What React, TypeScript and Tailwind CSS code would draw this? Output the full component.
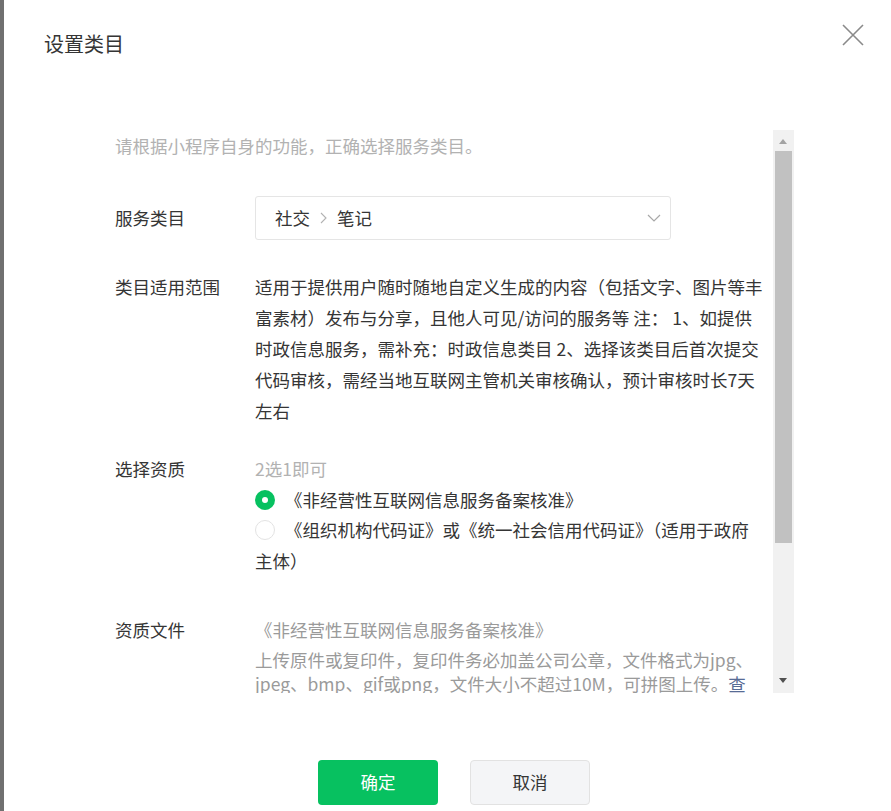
import { ReactElement } from 'react';

const scopeLines = [
  '适用于提供用户随时随地自定义生成的内容（包括文字、图片等丰',
  '富素材）发布与分享，且他人可见/访问的服务等 注： 1、如提供',
  '时政信息服务，需补充：时政信息类目 2、选择该类目后首次提交',
  '代码审核，需经当地互联网主管机关审核确认，预计审核时长7天',
  '左右',
];

const Radio = ({ checked }: { checked: boolean }): ReactElement =>
  checked ? (
    <span className="mr-[10px] flex h-[20px] w-[20px] shrink-0 items-center justify-center rounded-full bg-[#07c160]">
      <span className="h-[6px] w-[6px] rounded-full bg-white" />
    </span>
  ) : (
    <span className="mr-[10px] h-[20px] w-[20px] shrink-0 rounded-full border border-[#e3e3e3] bg-white" />
  );

export default function App(): ReactElement {
  return (
    <div className="relative flex h-[811px] w-[891px] overflow-hidden bg-white font-['Noto_Sans_CJK_SC',sans-serif] text-[#353535]">
      <div className="w-[4px] shrink-0 bg-[#707070]" />

      <div className="flex flex-1 flex-col">
        <h2 className="pl-[40px] pt-[29px] text-[20px] leading-[30px] font-normal">设置类目</h2>

        <button className="absolute left-[842px] top-[24px] h-[22px] w-[22px]" aria-label="关闭">
          <svg width="22" height="22" viewBox="0 0 22 22">
            <path d="M1 1L21 21M21 1L1 21" stroke="#8a8a8a" strokeWidth="1.6" fill="none" />
          </svg>
        </button>

        {/* scroll area */}
        <div className="ml-[111px] mt-[71px] flex h-[563px] w-[679px]">
          <div className="h-full w-[658px] overflow-hidden text-[17.5px]">
            <p className="leading-[31px] text-[#b2b2b2]">请根据小程序自身的功能，正确选择服务类目。</p>

            <div className="mt-[35px] flex">
              <div className="w-[140px] leading-[44px]">服务类目</div>
              <div className="flex h-[44px] w-[416px] items-center justify-between rounded-[3px] border border-[#e5e5e5] pl-[19px] pr-[9px]">
                <div className="flex items-center leading-[24px]">
                  <span>社交</span>
                  <svg className="mx-[10px]" width="7" height="12" viewBox="0 0 7 12">
                    <path d="M1 1L6 6L1 11" stroke="#b2b2b2" strokeWidth="1.1" fill="none" />
                  </svg>
                  <span>笔记</span>
                </div>
                <svg width="14" height="8" viewBox="0 0 14 8">
                  <path d="M1 1L7 7L13 1" stroke="#a8a8a8" strokeWidth="1.2" fill="none" />
                </svg>
              </div>
            </div>

            <div className="mt-[31px] flex">
              <div className="w-[140px] leading-[31px]">类目适用范围</div>
              <div className="leading-[31px]">
                {scopeLines.map((l) => (
                  <div key={l} className="whitespace-nowrap">{l}</div>
                ))}
              </div>
            </div>

            <div className="mt-[28px] flex">
              <div className="w-[140px] leading-[30.5px]">选择资质</div>
              <div className="leading-[30.5px]">
                <div className="text-[#b2b2b2]">2选1即可</div>
                <div className="flex items-center whitespace-nowrap">
                  <Radio checked />
                  《非经营性互联网信息服务备案核准》
                </div>
                <div className="flex items-center whitespace-nowrap">
                  <Radio checked={false} />
                  《组织机构代码证》或《统一社会信用代码证》（适用于政府
                </div>
                <div>主体）</div>
              </div>
            </div>

            <div className="mt-[39px] flex">
              <div className="w-[140px] leading-[30.5px]">资质文件</div>
              <div className="text-[#9a9a9a]">
                <div className="whitespace-nowrap leading-[30.5px]">《非经营性互联网信息服务备案核准》</div>
                <div className="mt-[2px] leading-[24px]">
                  <div className="whitespace-nowrap">上传原件或复印件，复印件务必加盖公司公章，文件格式为jpg、</div>
                  <div className="whitespace-nowrap">
                    jpeg、bmp、gif或png，文件大小不超过10M，可拼图上传。<span className="text-[#576b95]">查</span>
                  </div>
                  <div className="whitespace-nowrap text-[#576b95]">看示例</div>
                </div>
              </div>
            </div>
          </div>

          {/* scrollbar */}
          <div className="relative h-full w-[21px] bg-[#f1f1f1]">
            <div className="absolute left-[6px] top-[9px] h-0 w-0 border-x-[4.5px] border-b-[5px] border-x-transparent border-b-[#a3a3a3]" />
            <div className="absolute left-[2px] top-[21px] h-[392px] w-[17px] bg-[#c1c1c1]" />
            <div className="absolute bottom-[10px] left-[6px] h-0 w-0 border-x-[4.5px] border-t-[5px] border-x-transparent border-t-[#505050]" />
          </div>
        </div>

        <div className="mt-[67px] flex gap-[32px] pl-[314px]">
          <button className="h-[45px] w-[120px] rounded-[4px] bg-[#07c160] text-[17.5px] text-white">确定</button>
          <button className="h-[45px] w-[120px] rounded-[4px] border border-[#e2e2e2] bg-[#f4f5f7] text-[17.5px] text-[#353535]">取消</button>
        </div>
      </div>
    </div>
  );
}
